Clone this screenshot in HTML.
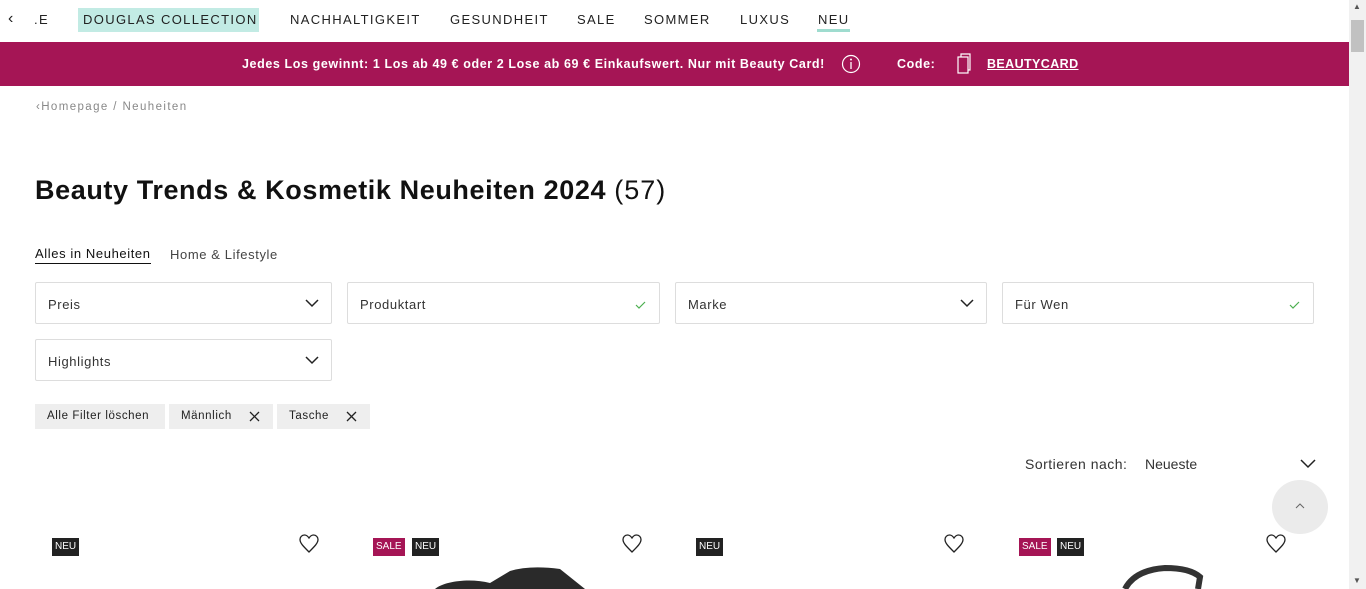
<!DOCTYPE html>
<html><head><meta charset="utf-8"><style>
*{box-sizing:border-box;margin:0;padding:0}
body{width:1366px;height:589px;overflow:hidden;background:#fff;font-family:"Liberation Sans",sans-serif;color:#222;position:relative}
.abs{position:absolute}
.nav span{position:absolute;top:12px;font-size:13px;letter-spacing:1.35px;color:#222}
.banner{left:0;top:42px;width:1349px;height:44px;background:#a51555;color:#fff;font-weight:bold;font-size:12.5px}
.sb{left:1349px;top:0;width:17px;height:589px;background:#f1f1f1}
.box{position:absolute;height:42px;border:1px solid #ddd;border-radius:2px;font-size:13px;letter-spacing:.6px;color:#333;padding:14px 12px}
.box svg{position:absolute;right:12px;top:15px}
.chip{position:absolute;top:404px;height:25px;background:#eee;font-size:11.5px;letter-spacing:.6px;color:#222;padding:6px 12px}
.tag{position:absolute;top:538px;height:18px;font-size:10px;color:#fff;padding:3px 3px;background:#222}
.heart{position:absolute;top:534px}
</style></head><body>
<div class="nav">
<span style="left:8px;top:10px;font-size:16px">‹</span>
<span style="left:34px">.E</span>
<div class="abs" style="left:78px;top:8px;width:181px;height:24px;background:#c2ebe4"></div>
<span style="left:83px">DOUGLAS COLLECTION</span>
<span style="left:290px">NACHHALTIGKEIT</span>
<span style="left:450px">GESUNDHEIT</span>
<span style="left:577px">SALE</span>
<span style="left:644px">SOMMER</span>
<span style="left:740px">LUXUS</span>
<span style="left:818px">NEU</span>
<div class="abs" style="left:817px;top:29px;width:33px;height:3px;background:#9fdccf"></div>
</div>
<div class="abs banner">
<span class="abs" style="left:242px;top:15px;letter-spacing:.6px">Jedes Los gewinnt: 1 Los ab 49 € oder 2 Lose ab 69 € Einkaufswert. Nur mit Beauty Card!</span>
<svg class="abs" style="left:841px;top:12px" width="20" height="20"><circle cx="10" cy="10" r="8.5" fill="none" stroke="#fff" stroke-width="1.2"/><line x1="10" y1="8" x2="10" y2="15" stroke="#fff" stroke-width="1.3"/><circle cx="10" cy="5.5" r="1" fill="#fff"/></svg>
<span class="abs" style="left:897px;top:15px;letter-spacing:.6px">Code:</span>
<svg class="abs" style="left:956px;top:11px" width="16" height="22"><rect x="2" y="4" width="10" height="16" fill="none" stroke="#fff" stroke-width="1.2"/><path d="M5 4V1h9v16h-2" fill="none" stroke="#fff" stroke-width="1.2"/></svg>
<span class="abs" style="left:987px;top:15px;text-decoration:underline;letter-spacing:.4px">BEAUTYCARD</span>
</div>
<div class="abs sb"><div class="abs" style="left:2px;top:20px;width:13px;height:32px;background:#c1c1c1"></div><span class="abs" style="left:4px;top:2px;font-size:8px;color:#555">▲</span><span class="abs" style="left:4px;top:576px;font-size:8px;color:#555">▼</span></div>
<div class="abs" style="left:36px;top:101px;font-size:11.5px;letter-spacing:1.4px;color:#888">‹Homepage / Neuheiten</div>
<div class="abs" style="left:35px;top:175px;font-size:27px;color:#111;letter-spacing:.6px"><b>Beauty Trends &amp; Kosmetik Neuheiten 2024</b> <span style="font-weight:normal;letter-spacing:1px">(57)</span></div>
<div class="abs" style="left:35px;top:246px;font-size:13px;letter-spacing:.6px;color:#111;padding-bottom:2px;border-bottom:1px solid #111">Alles in Neuheiten</div>
<div class="abs" style="left:170px;top:247px;font-size:13px;letter-spacing:.6px;color:#444">Home &amp; Lifestyle</div>
<div class="box" style="left:35px;top:282px;width:297px">Preis<svg width="14" height="10"><path d="M1 2l6 6 6-6" fill="none" stroke="#222" stroke-width="1.5"/></svg></div>
<div class="box" style="left:347px;top:282px;width:313px">Produktart<svg width="12" height="10" style="top:17px"><path d="M1 5l3 3 6-6" fill="none" stroke="#4caf50" stroke-width="1.2"/></svg></div>
<div class="box" style="left:675px;top:282px;width:312px">Marke<svg width="14" height="10"><path d="M1 2l6 6 6-6" fill="none" stroke="#222" stroke-width="1.5"/></svg></div>
<div class="box" style="left:1002px;top:282px;width:312px">Für Wen<svg width="12" height="10" style="top:17px"><path d="M1 5l3 3 6-6" fill="none" stroke="#4caf50" stroke-width="1.2"/></svg></div>
<div class="box" style="left:35px;top:339px;width:297px">Highlights<svg width="14" height="10"><path d="M1 2l6 6 6-6" fill="none" stroke="#222" stroke-width="1.5"/></svg></div>
<div class="chip" style="left:35px;width:130px">Alle Filter löschen</div>
<div class="chip" style="left:169px;width:104px">Männlich<svg class="abs" style="left:80px;top:7px" width="11" height="11"><path d="M1 1l9 9M10 1l-9 9" stroke="#222" stroke-width="1.3"/></svg></div>
<div class="chip" style="left:277px;width:93px">Tasche<svg class="abs" style="left:69px;top:7px" width="11" height="11"><path d="M1 1l9 9M10 1l-9 9" stroke="#222" stroke-width="1.3"/></svg></div>
<div class="abs" style="left:1025px;top:456px;font-size:14px;letter-spacing:.5px;color:#333">Sortieren nach:</div>
<div class="abs" style="left:1145px;top:456px;font-size:14px;color:#333">Neueste</div>
<svg class="abs" style="left:1300px;top:459px" width="16" height="10"><path d="M1 1l7 7 7-7" fill="none" stroke="#222" stroke-width="1.5"/></svg>
<div class="abs" style="left:1272px;top:480px;width:56px;height:54px;border-radius:50%;background:#ebebeb"></div>
<svg class="abs" style="left:1295px;top:502px" width="10" height="7"><path d="M1 6l4-4 4 4" fill="none" stroke="#666" stroke-width="1"/></svg>
<div class="tag" style="left:52px">NEU</div>
<div class="tag" style="left:373px;background:#a51555">SALE</div><div class="tag" style="left:412px">NEU</div>
<div class="tag" style="left:696px">NEU</div>
<div class="tag" style="left:1019px;background:#a51555">SALE</div><div class="tag" style="left:1057px">NEU</div>
<svg class="heart" style="left:299px" width="20" height="20"><path d="M10 18C4 12 1 9 1 5.5 1 3 3 1 5.5 1 7.5 1 9 2.5 10 4 11 2.5 12.5 1 14.5 1 17 1 19 3 19 5.5 19 9 16 12 10 18z" fill="none" stroke="#222" stroke-width="1.3"/></svg>
<svg class="heart" style="left:622px" width="20" height="20"><path d="M10 18C4 12 1 9 1 5.5 1 3 3 1 5.5 1 7.5 1 9 2.5 10 4 11 2.5 12.5 1 14.5 1 17 1 19 3 19 5.5 19 9 16 12 10 18z" fill="none" stroke="#222" stroke-width="1.3"/></svg>
<svg class="heart" style="left:944px" width="20" height="20"><path d="M10 18C4 12 1 9 1 5.5 1 3 3 1 5.5 1 7.5 1 9 2.5 10 4 11 2.5 12.5 1 14.5 1 17 1 19 3 19 5.5 19 9 16 12 10 18z" fill="none" stroke="#222" stroke-width="1.3"/></svg>
<svg class="heart" style="left:1266px" width="20" height="20"><path d="M10 18C4 12 1 9 1 5.5 1 3 3 1 5.5 1 7.5 1 9 2.5 10 4 11 2.5 12.5 1 14.5 1 17 1 19 3 19 5.5 19 9 16 12 10 18z" fill="none" stroke="#222" stroke-width="1.3"/></svg>
<svg class="abs" style="left:430px;top:563px" width="170" height="26"><path d="M5 26C15 18 40 15 60 20L80 8Q100 2 130 6L155 26z" fill="#2a2a2a"/></svg>
<svg class="abs" style="left:1120px;top:565px" width="90" height="24"><path d="M5 24Q15 5 45 3Q70 3 80 12L78 24" fill="none" stroke="#333" stroke-width="6"/></svg>
</body></html>
